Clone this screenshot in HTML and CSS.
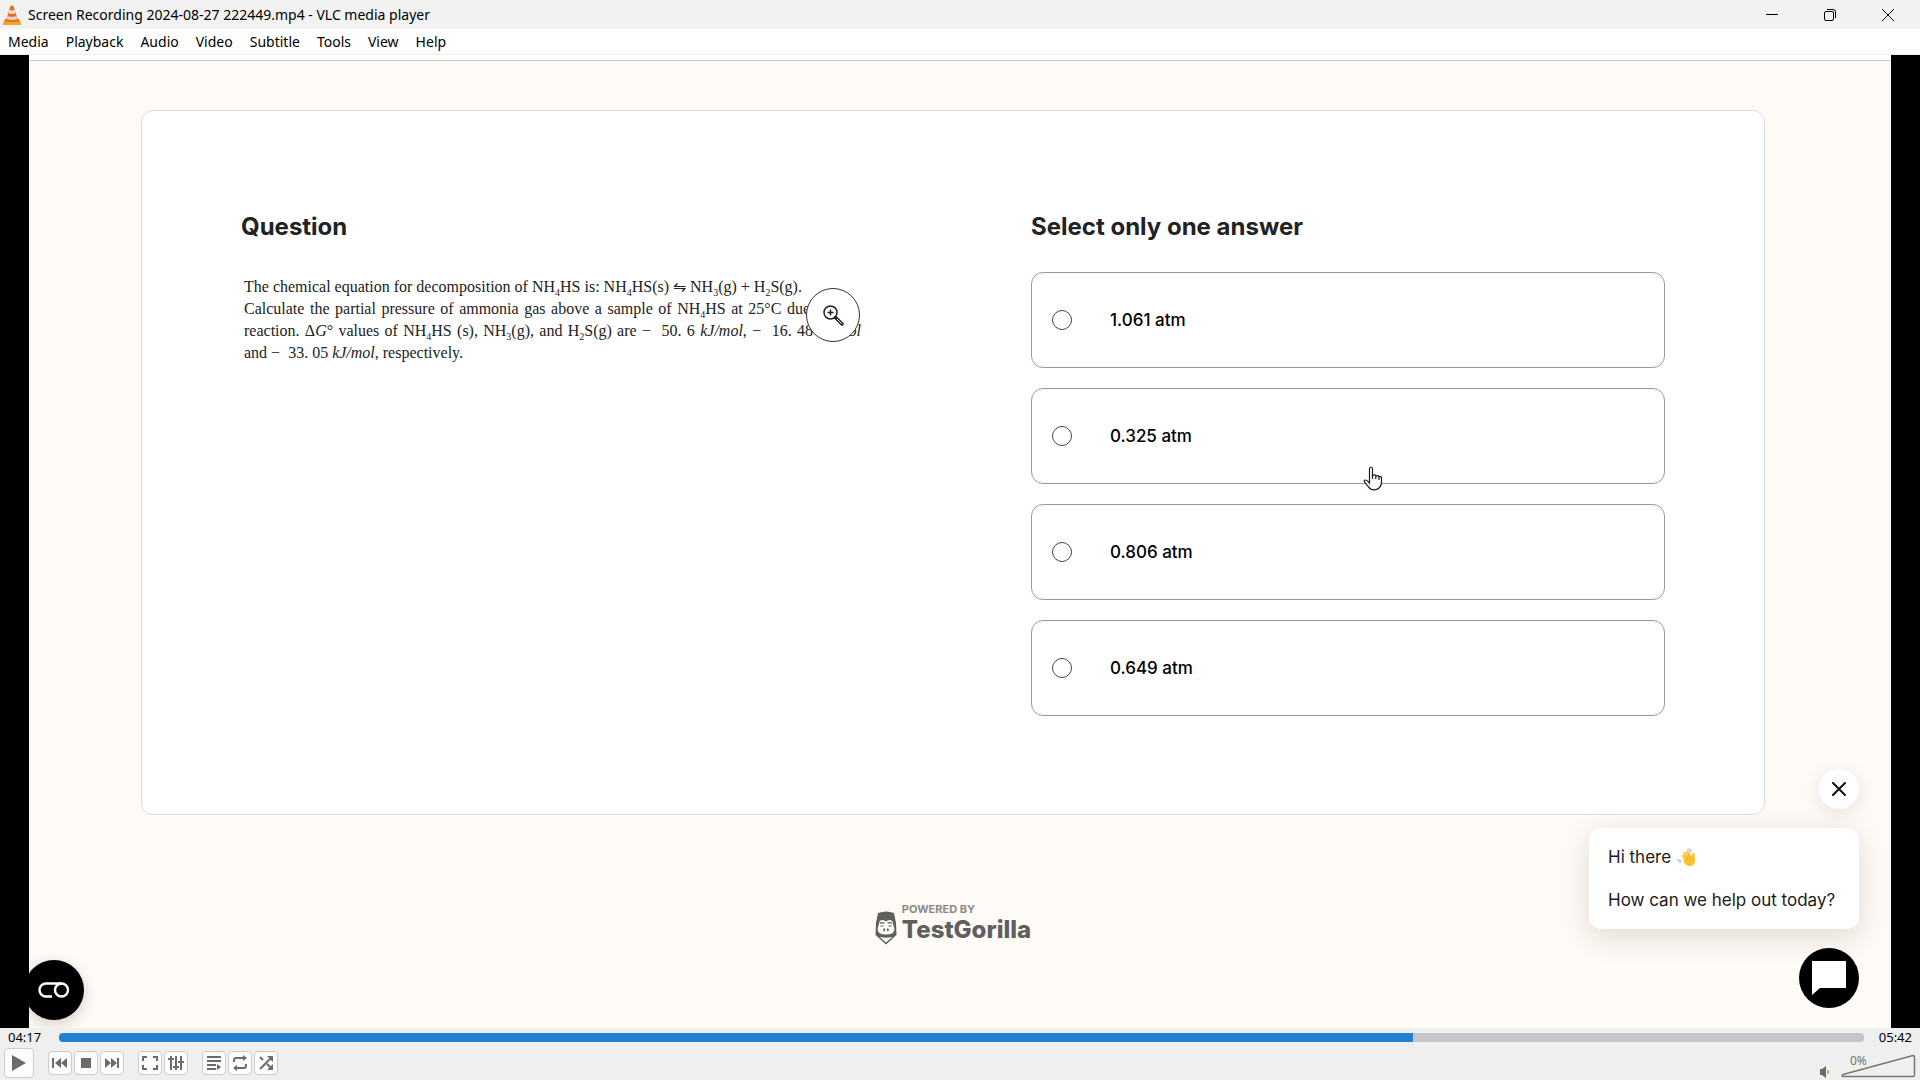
FILE: index.html
```html
<!DOCTYPE html>
<html lang="en">
<head>
<meta charset="utf-8">
<title>Screen Recording 2024-08-27 222449.mp4 - VLC media player</title>
<link rel="stylesheet" href="styles.css">
</head>
<body>
<header class="titlebar">
  <svg class="cone" width="18" height="20" viewBox="0 0 18 22" preserveAspectRatio="none" aria-hidden="true">
    <path d="M2 15h14l2 6q0 1-1 1H1q-1 0-1-1z" fill="#f08a1c"/>
    <path d="M1 19h16l1 2q0 1-1 1H1q-1 0-1-1z" fill="#f9a528"/>
    <path d="M7.500 1q1.500-1 3 0L15 17q-6 3.500-12 0z" fill="#ee6f12"/>
    <path d="M6.400 5.500q2.600 1 5.200 0l1 3.500q-3.600 1.500-7.200 0z" fill="#e4e4e4"/>
    <path d="M4.600 12q4.400 2 8.800 0l1 3.300q-5.400 2.200-10.800 0z" fill="#d9d9d9"/>
  </svg>
  <h1 class="window-title">Screen Recording 2024-08-27 222449.mp4 - VLC media player</h1>
  <div class="window-buttons">
    <button class="window-button" aria-label="Minimize"><svg width="12" height="12" viewBox="0 0 12 12"><path d="M0 5.500h12" stroke="#000" fill="none"/></svg></button>
    <button class="window-button" aria-label="Restore"><svg width="12" height="12" viewBox="0 0 12 12" fill="none" stroke="#000"><rect x=".5" y="2.500" width="9" height="9" rx="1.500"/><path d="M3 .5h6a2.500 2.500 0 0 1 2.500 2.500v6"/></svg></button>
    <button class="window-button" aria-label="Close"><svg width="12" height="12" viewBox="0 0 12 12"><path d="M0 0l12 12M12 0L0 12" stroke="#000" fill="none"/></svg></button>
  </div>
</header>
<nav class="menubar">
  <button class="menu">Media</button>
  <button class="menu">Playback</button>
  <button class="menu">Audio</button>
  <button class="menu">Video</button>
  <button class="menu">Subtitle</button>
  <button class="menu">Tools</button>
  <button class="menu">View</button>
  <button class="menu">Help</button>
</nav>

<div class="video">
  <main class="page">
    <div class="page-edge"></div>
    <section class="card">
      <div class="column">
        <h2 class="heading">Question</h2>
        <div class="question">
          <p class="question-text">
            <span class="line">The chemical equation for decomposition of NH<sub>4</sub>HS is: NH<sub>4</sub>HS(s) ⇋ NH<sub>3</sub>(g) + H<sub>2</sub>S(g).</span>
            <span class="line line-fill line-inset">Calculate the partial pressure of ammonia gas above a sample of NH<sub>4</sub>HS at 25°C due to</span>
            <span class="line line-fill">reaction. Δ<i>G</i>° values of NH<sub>4</sub>HS (s), NH<sub>3</sub>(g), and H<sub>2</sub>S(g) are −&nbsp; 50. 6 <i>kJ/mol</i>, −&nbsp; 16. 48 <i>kJ/mol</i></span>
            <span class="line">and −&nbsp; 33. 05 <i>kJ/mol</i>, respectively.</span>
          </p>
          <button class="zoom" aria-label="Zoom image">
            <svg width="22" height="22" viewBox="0 0 22 22" fill="none" stroke="#222"><circle cx="8.500" cy="8.500" r="6.500" stroke-width="1.500"/><path d="M8.500 5.500v6M5.500 8.500h6" stroke-width="1.500"/><path d="M13.500 13.500l6.500 6.500" stroke-width="3.400" stroke-linecap="round"/><path d="M15 15l4.800 4.800" stroke="#fff" stroke-width="1"/></svg>
          </button>
        </div>
      </div>
      <form class="column">
        <h2 class="heading">Select only one answer</h2>
        <div class="options">
          <label class="option"><input class="radio" type="radio" name="answer">1.061 atm</label>
          <label class="option"><input class="radio" type="radio" name="answer">0.325 atm</label>
          <label class="option"><input class="radio" type="radio" name="answer">0.806 atm</label>
          <label class="option"><input class="radio" type="radio" name="answer">0.649 atm</label>
          <svg class="pointer" width="20" height="25" viewBox="0 0 20 25" aria-hidden="true"><path d="M6.500 14V3q0-2 1.500-2t1.500 2v6.500q3-1.500 3.500.500q2.500-1.200 3 .7q2.500-.6 2.500 1.800V16q0 4-2.500 6-1.500 1.800-5 1.800-3.500 0-5.500-3L1.500 16q-1-2 1-2 1.500 0 4 3z" fill="#fff" stroke="#1c1c2b" stroke-width="1.200"/><path d="M9.500 9v4M12.800 9.800V13M16 10.500V14" stroke="#1c1c2b" stroke-width="1.200"/></svg>
        </div>
      </form>
    </section>
    <footer class="brand">
      <svg class="gorilla" width="22" height="34" viewBox="0 0 22 34" aria-hidden="true">
        <path d="M3 2q8-3 16 0l2 10 .5 12L11 33.500.5 24 1 12z" fill="#5f5f5f"/>
        <path d="M4 13q0-4 3.500-4 2 0 3.500 1.500Q12.500 9 14.500 9 18 9 18 13l1.500 5q0 5.500-8.500 5.500T2.500 18z" fill="#fefaf5"/>
        <path d="M5 12.500q2-1.800 4.500-.3M12.500 12.200q2.500-1.500 4.500.3M5.500 15h3M13.500 15h3" stroke="#5f5f5f" stroke-width="1.200" fill="none"/>
        <ellipse cx="9.200" cy="18.800" rx="1" ry="1.500" fill="#5f5f5f"/><ellipse cx="12.800" cy="18.800" rx="1" ry="1.500" fill="#5f5f5f"/>
        <path d="M4.500 25.800q6.500 2 13 0L11 31.500z" fill="#fefaf5"/>
      </svg>
      <div class="brand-text">
        <span class="powered">POWERED BY</span>
        <span class="brand-name">TestGorilla</span>
      </div>
    </footer>

    <button class="round-button cookie" aria-label="Cookie settings">
      <svg width="32" height="18" viewBox="0 0 32 18" fill="none" stroke="#fff" stroke-width="2.400"><path d="M14 15.500H8a6.500 6.500 0 0 1 0-13H24"/><circle cx="23.500" cy="9" r="6.500"/></svg>
    </button>
    <aside class="chat">
      <button class="chat-close" aria-label="Close message"><svg width="14" height="14" viewBox="0 0 14 14"><path d="M1 1l12 12M13 1L1 13" stroke="#111" stroke-width="2" stroke-linecap="round" fill="none"/></svg></button>
      <div class="bubble">
        <p class="message">Hi there
          <svg class="wave" width="19" height="19" viewBox="0 0 19 19" role="img" aria-label="Waving hand"><g fill="none" stroke="#ffc93d" stroke-linecap="round" stroke-width="2.600"><path d="M6 8l5 6M7.500 5l5 7M10.500 4l4 7M16.500 6v6"/></g><path d="M7 10.500l9.500-3q2 3 1.400 6.500-1 4.300-5 4Q9 18 6.500 13.500z" fill="#ffc02e"/><path d="M8.500 7.500l3 4M11 6l2.500 4" stroke="#d99622" stroke-width=".7"/><path d="M10 2q3-2.500 5 1.500M11.500 3q1.500-.6 2 1M1 11q-.5 3 3 3.500M2.800 11.500q0 1.500 1.500 1.500" stroke="#8fb4ee" fill="none"/></svg>
        </p>
        <p class="message">How can we help out today?</p>
      </div>
      <button class="round-button" aria-label="Open chat">
        <svg width="34" height="34" viewBox="0 0 34 34"><path d="M0 0h34v27H8l-8 7z" fill="#fff"/></svg>
      </button>
    </aside>
  </main>
</div>

<footer class="player">
  <div class="seek">
    <time class="time">04:17</time>
    <input class="seekbar" type="range" min="0" max="342" value="257" aria-label="Position">
    <time class="time">05:42</time>
  </div>
  <div class="controls">
    <button class="control play" aria-label="Play"><svg width="16" height="18" viewBox="0 0 16 18"><path d="M1 1l14 8-14 8z"/></svg></button>
    <div class="group">
      <button class="control" aria-label="Previous"><svg width="16" height="12" viewBox="0 0 16 12"><path d="M0 1h2v10H0zM3 6l6-5v10zM9 6l6-5v10z"/></svg></button>
      <button class="control" aria-label="Stop"><svg width="10" height="10" viewBox="0 0 10 10"><path d="M0 0h10v10H0z"/></svg></button>
      <button class="control" aria-label="Next"><svg width="16" height="12" viewBox="0 0 16 12"><path d="M1 1l6 5-6 5zM7 1l6 5-6 5zM13 1h2v10h-2z"/></svg></button>
    </div>
    <div class="group">
      <button class="control" aria-label="Fullscreen"><svg width="18" height="14" viewBox="0 0 18 14"><path d="M2 5V1h4M12 1h4v4M16 9v4h-4M6 13H2V9" class="stroke"/></svg></button>
      <button class="control" aria-label="Extended settings"><svg width="16" height="14" viewBox="0 0 16 14"><path d="M3 0v14M8 0v14M13 0v14M0 3h6M5 11h6M10 6h6" class="stroke"/></svg></button>
    </div>
    <div class="group">
      <button class="control" aria-label="Playlist"><svg width="14" height="14" viewBox="0 0 14 14"><path d="M0 1h14M0 5h14M0 9h9M0 13h9" class="stroke"/><path d="M10 8l4 3-4 3z"/></svg></button>
      <button class="control" aria-label="Loop"><svg width="14" height="16" viewBox="0 0 14 16"><path d="M1 7V5q0-2 2-2h8M13 9v2q0 2-2 2H3" class="stroke"/><path d="M10 0l4 3-4 3zM4 10l-4 3 4 3z"/></svg></button>
      <button class="control" aria-label="Random"><svg width="14" height="14" viewBox="0 0 14 14"><path d="M1 1l3 3M8 8l4 4M1 13L12 2" class="stroke"/><path d="M8 0h6v6zM14 8v6H8z"/></svg></button>
    </div>
    <div class="volume">
      <button class="mute" aria-label="Mute"><svg width="10" height="12" viewBox="0 0 10 12"><path d="M0 3h2l4-3v12L2 9H0z"/><path d="M7.500 4q1.500 2 0 4" fill="none" stroke="#f59a2c" stroke-width="1.500"/></svg></button>
      <label class="level">
        <span class="level-text">0%</span>
        <svg class="wedge" width="75" height="24" viewBox="0 0 75 24"><path d="M2 22.500q-2-1 0-2L72 1.500q1.500 0 1.500 1.500v18q0 1.500-1.500 1.500z" fill="none" stroke="#777" stroke-width="1.500"/></svg>
        <input class="level-input" type="range" min="0" max="125" value="0" aria-label="Volume">
      </label>
    </div>
  </div>
</footer>
</body>
</html>
```
FILE: styles.css
```css
* { box-sizing: border-box; }
body {
  margin: 0;
  min-height: 100vh;
  display: flex;
  flex-direction: column;
  background: #fff;
  color: #000;
  font-family: "Noto Sans", "Open Sans", sans-serif;
  font-size: 14px;
}
button { padding: 0; border: 0; background: none; font: inherit; color: inherit; }
svg { display: block; }
h1, h2, p { margin: 0; }

.titlebar { display: flex; align-items: center; height: 29px; padding-left: 3px; background: #f2f2f2; }
.window-title { flex: 1; margin-left: 7px; font-size: 14px; font-weight: 400; line-height: 20px; }
.window-buttons { display: flex; }
.window-button { display: grid; place-items: center; width: 58px; height: 28px; }
.window-button:last-child { margin-right: 3px; }

.menubar { display: flex; gap: 17px; height: 26px; padding: 0 8px; border-bottom: 1px solid #eee; }
.menu { line-height: 26px; }

.video { flex: 1; display: flex; padding: 0 29px; background: #000; }
.page {
  position: relative;
  flex: 1;
  overflow: hidden;
  background: #fefaf5;
  font-family: Inter, "Open Sans", sans-serif;
}
.page-edge { height: 6px; background: #fff; border-bottom: 1px solid #ccc; }
.card {
  display: grid;
  grid-template-columns: 1fr 1fr;
  gap: 156px;
  min-height: 705px;
  margin: 49px 126px 0 112px;
  padding: 100px 99px 98px;
  border: 1px solid #ddd;
  border-radius: 12px;
  background: #fff;
}
.heading { font-size: 24px; line-height: 32px; font-weight: 700; color: #222; }
.column { min-width: 0; }

.question { position: relative; margin-top: 33px; padding-left: 3px; }
.question-text { width: 617px; font-family: "Liberation Serif", serif; font-size: 16px; line-height: 22px; color: #222; white-space: nowrap; }
.question-text sub { font-size: 10px; line-height: 0; }
.line { display: block; }
.line-fill { white-space: normal; text-align-last: justify; }
.line-inset { padding-right: 33px; }
.zoom {
  position: absolute;
  top: 12px;
  left: 565px;
  display: grid;
  place-items: center;
  width: 54px;
  height: 54px;
  border: 1px solid #333;
  border-radius: 50%;
  background: #fff;
}

.options { position: relative; display: grid; gap: 20px; margin-top: 29px; }
.option {
  display: flex;
  align-items: center;
  gap: 38px;
  height: 96px;
  padding-left: 20px;
  border: 1px solid #999;
  border-radius: 12px;
  font-size: 17px;
  font-weight: 500;
}
.radio { appearance: none; width: 20px; height: 20px; margin: 0; border: 1px solid #444; border-radius: 50%; background: #fff; }
.pointer { position: absolute; top: 194px; left: 332px; }

.brand { display: flex; justify-content: center; align-items: flex-end; gap: 5px; margin: 88px 126px 0 112px; color: #5f5f5f; }
.brand-text { display: flex; flex-direction: column; }
.powered { font-size: 11px; line-height: 12px; font-weight: 700; color: #8a8a8a; }
.brand-name { font-size: 24px; line-height: 30px; font-weight: 800; }

.round-button { display: grid; place-items: center; width: 60px; height: 60px; border-radius: 50%; background: #000; }
.cookie { position: absolute; left: -5px; bottom: 8px; box-shadow: 0 4px 14px rgba(60, 30, 20, .2); }
.chat { position: absolute; right: 32px; bottom: 20px; display: flex; flex-direction: column; align-items: flex-end; gap: 19px; }
.chat-close { display: grid; place-items: center; width: 40px; height: 40px; border-radius: 50%; background: #fff; box-shadow: 0 5px 20px rgba(60, 30, 20, .1); }
.bubble {
  display: grid;
  gap: 19px;
  width: 270px;
  padding: 17px 19px;
  border-radius: 12px;
  background: #fff;
  box-shadow: 0 8px 30px rgba(60, 30, 20, .14);
}
.message { display: flex; align-items: center; gap: 6px; font-size: 17px; line-height: 24px; color: #1a1a1a; white-space: nowrap; }

.player { background: #efefef; padding: 0 4px 2px; }
.seek { display: flex; align-items: center; height: 20px; padding: 0 4px 2px; }
.time { width: 51px; font-size: 13px; line-height: 18px; }
.time:last-child { width: 48px; text-align: right; }
.seekbar {
  appearance: none;
  flex: 1;
  height: 9px;
  margin: 0;
  border-radius: 4px;
  background: linear-gradient(90deg, #257fd3 75%, #c6c6c6 75%);
}
.seekbar::-webkit-slider-thumb { appearance: none; width: 0; height: 0; }
.controls { display: flex; align-items: center; gap: 14px; height: 30px; }
.group { display: flex; gap: 2px; }
.control { display: grid; place-items: center; width: 24px; height: 24px; border: 1px solid #ccc; border-radius: 4px; background: #fdfdfd; }
.play { width: 30px; height: 30px; }
.control svg, .mute svg { fill: #6b6b6b; }
.control .stroke { fill: none; stroke: #6b6b6b; stroke-width: 2; }
.volume { display: flex; align-items: flex-end; align-self: flex-end; gap: 11px; margin-left: auto; }
.level { position: relative; }
.level-text { position: absolute; left: 9px; top: -2px; font-size: 12px; line-height: 18px; color: #777; }
.level-input { position: absolute; inset: 0; width: 100%; height: 100%; margin: 0; opacity: 0; }
```
